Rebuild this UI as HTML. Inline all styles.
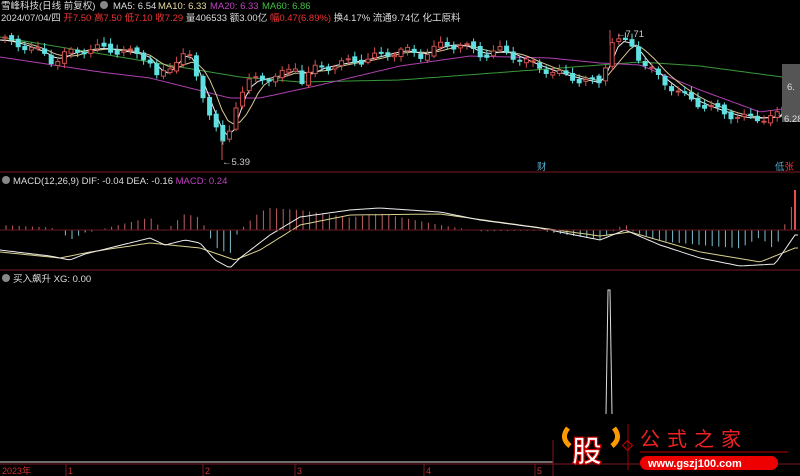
<!DOCTYPE html>
<html><head><meta charset="utf-8"><style>
html,body{margin:0;padding:0;background:#000;width:800px;height:476px;overflow:hidden}
svg{display:block;font-family:"Liberation Sans","Noto Sans CJK SC",sans-serif;font-size:9.5px}
</style></head><body>
<svg id="s" width="800" height="476" xmlns="http://www.w3.org/2000/svg">
<rect width="800" height="476" fill="#000"/>
<g id="g"></g>
<line x1="0" y1="172" x2="800" y2="172" stroke="#7a1a24"/>
<line x1="0" y1="270" x2="800" y2="270" stroke="#7a1a24"/>
<line x1="0" y1="230" x2="800" y2="230" stroke="#6a1820" stroke-width="1"/>
<line x1="0" y1="462" x2="553" y2="462" stroke="#ddd"/>
<line x1="0" y1="464" x2="800" y2="464" stroke="#7a1a24"/>
<line x1="553" y1="440" x2="553" y2="476" stroke="#7a1a24"/>
<g fill="#c33" font-size="9">
<text x="2" y="474">2023年</text>
<text x="68" y="474">1</text><text x="205" y="474">2</text>
<text x="297" y="474">3</text><text x="426" y="474">4</text><text x="537" y="474">5</text>
</g>
<g stroke="#7a1a24"><line x1="66" y1="464" x2="66" y2="476"/><line x1="203" y1="464" x2="203" y2="476"/><line x1="295" y1="464" x2="295" y2="476"/><line x1="424" y1="464" x2="424" y2="476"/><line x1="535" y1="464" x2="535" y2="476"/></g>
<text x="1" y="9" fill="#ddd">雪峰科技(日线 前复权)</text>
<circle cx="104" cy="5" r="4" fill="#888"/>
<text x="113" y="9" fill="#ddd">MA5: 6.54</text>
<text x="158" y="9" fill="#e8d9a0">MA10: 6.33</text>
<text x="210" y="9" fill="#c040c0">MA20: 6.33</text>
<text x="262" y="9" fill="#40c040">MA60: 6.86</text>
<text x="1" y="21" fill="#ddd">2024/07/04/四 <tspan fill="#e33">开7.50 高7.50 低7.10 收7.29</tspan> 量406533 额3.00亿 <tspan fill="#e33">幅0.47(6.89%)</tspan> 换4.17% 流通9.74亿 化工原料</text>
<circle cx="6" cy="180" r="4" fill="#888"/>
<text x="13" y="184" fill="#ddd">MACD(12,26,9)  DIF: -0.04  DEA: -0.16  <tspan fill="#c040c0">MACD: 0.24</tspan></text>
<circle cx="6" cy="278" r="4" fill="#888"/>
<text x="13" y="282" fill="#ddd">买入飙升 XG: 0.00</text>
<text x="222" y="165" fill="#ccc">←5.39</text>
<text x="616" y="37" fill="#ccc">←7.71</text>
<text x="537" y="170" fill="#5ac">财</text>
<text x="775" y="170" fill="#5ac">低<tspan fill="#e33">张</tspan></text>
<rect x="782" y="64" width="18" height="58" fill="#555"/>
<text x="787" y="90" fill="#ddd">6.</text><text x="784" y="122" fill="#ddd">6.28</text>
<polyline points="606,414 608,290 610,290 612,414" fill="none" stroke="#ddd"/>
<g transform="translate(560,424)">
<path d="M8 4 Q0 14 10 22" stroke="#f90" stroke-width="5" fill="none"/>
<path d="M54 4 Q62 14 52 22" stroke="#f90" stroke-width="5" fill="none"/>
<text x="12" y="38" font-size="30" font-weight="bold" fill="#fff" stroke="#c00" stroke-width="1.2">股</text>
<line x1="68" y1="0" x2="68" y2="46" stroke="#a00"/>
<rect x="64" y="18" width="7" height="7" transform="rotate(45 67.5 21.5)" fill="none" stroke="#c00"/>
<text x="80" y="22" font-size="20" fill="#e22" letter-spacing="7">公式之家</text>
<line x1="80" y1="28" x2="228" y2="28" stroke="#b00"/>
<rect x="80" y="32" width="138" height="14" rx="7" fill="#e00"/>
<text x="88" y="43" font-size="11" font-weight="bold" fill="#fff">www.gszj100.com</text>
</g>
</svg>
<script>
(function(){
var NS="http://www.w3.org/2000/svg",g=document.getElementById('g');
function el(t,a){var e=document.createElementNS(NS,t);for(var k in a)e.setAttribute(k,a[k]);g.appendChild(e);return e;}
function interp(pts,x){for(var i=0;i<pts.length-1;i++){if(x>=pts[i][0]&&x<=pts[i+1][0]){var t=(x-pts[i][0])/(pts[i+1][0]-pts[i][0]);return pts[i][1]+t*(pts[i+1][1]-pts[i][1]);}}return pts[pts.length-1][1];}
function line(pts,c){var d="";for(var x=0;x<=800;x+=3)d+=(d?"L":"M")+x+","+interp(pts,x).toFixed(1);el('path',{d:d,stroke:c,fill:'none','stroke-width':1});}
var price=[[0,40],[20,45],[45,55],[52,63],[60,55],[80,50],[100,48],[140,55],[150,62],[155,78],[165,72],[175,58],[185,50],[195,80],[205,105],[215,130],[222,148],[228,130],[235,100],[245,82],[255,80],[285,73],[295,65],[300,80],[310,70],[330,65],[360,60],[380,55],[400,50],[420,55],[440,45],[460,45],[480,55],[500,50],[520,60],[540,68],[560,75],[580,80],[600,84],[608,40],[620,42],[630,45],[640,62],[660,80],[680,95],[700,105],[720,112],[740,118],[760,118],[780,115],[790,75],[795,50]];
line([[0,37],[240,77],[300,82],[400,80],[480,74],[560,68],[640,62],[700,66],[790,78]],'#3a9a3a');
line([[0,57],[100,72],[150,78],[230,98],[260,98],[320,85],[400,66],[470,56],[550,58],[600,63],[640,65],[700,90],[760,112],[790,108]],'#b040b0');
var m10=[],m5=[];for(var x=0;x<=800;x+=6){var s=0,n=0;for(var k=-30;k<=0;k+=3){s+=interp(price,Math.max(0,x+k));n++;}m10.push([x,s/n]);s=0;n=0;for(var k2=-15;k2<=0;k2+=3){s+=interp(price,Math.max(0,x+k2));n++;}m5.push([x,s/n]);}
line(m10,'#d8c890');line(m5,'#eee');
var prev=interp(price,0);
for(var cx=3;cx<795;cx+=6.6){var c=interp(price,cx)+Math.sin(cx*1.7)*4,o=prev+Math.cos(cx*0.9)*2;var up=c<o;var col=up?'#d05050':'#60e0e0';var tp=Math.min(o,c),hh=Math.max(1,Math.abs(o-c));
el('line',{x1:cx+2,x2:cx+2,y1:tp-2-Math.abs(Math.sin(cx))*4,y2:tp+hh+2+Math.abs(Math.cos(cx))*3,stroke:col});
el('rect',{x:cx,y:tp,width:4,height:hh,fill:up?'#000':col,stroke:col,'stroke-width':1});prev=c;}
el('line',{x1:222,x2:222,y1:140,y2:160,stroke:'#d05050'});
el('line',{x1:610,x2:610,y1:30,y2:45,stroke:'#d05050'});
var dif=[[0,250],[50,256],[70,260],[85,254],[150,238],[165,245],[185,240],[200,243],[215,260],[230,268],[240,258],[270,235],[300,217],[350,210],[380,208],[440,212],[480,220],[540,228],[600,240],[625,230],[660,245],[700,258],[740,266],[775,264],[795,235]];
var dea=[[0,252],[60,258],[90,252],[150,243],[200,248],[235,260],[260,250],[300,225],[350,215],[440,214],[520,225],[600,236],[630,232],[700,252],[760,262],[795,248]];
for(var mx=6;mx<795;mx+=6.6){var v=interp(dea,mx)-interp(dif,mx);var bh=v*2.5;el('line',{x1:mx,x2:mx,y1:230,y2:230-bh,stroke:bh>0?'#c06060':'#80c0d0'});}
line(dea,'#d8d090');line(dif,'#eee');
el('line',{x1:795,x2:795,y1:190,y2:230,stroke:'#e05050','stroke-width':2});
})();
</script>
</body></html>
